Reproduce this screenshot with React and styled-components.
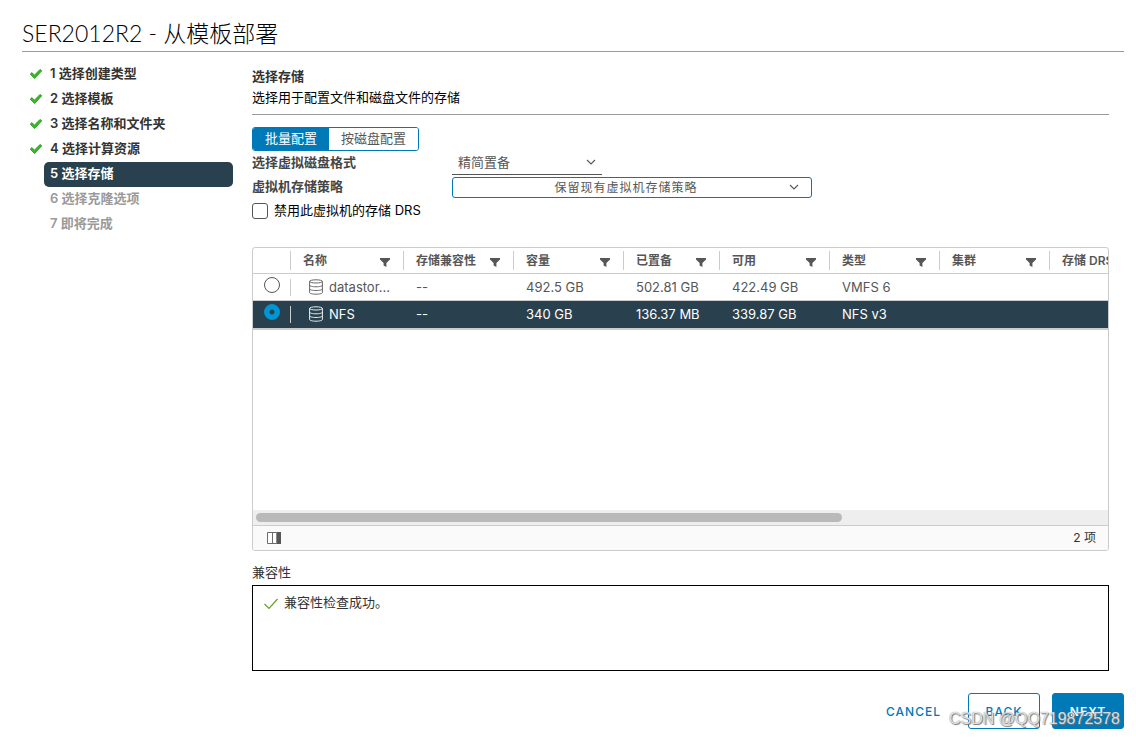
import React, { useState } from 'react';
import styled, { createGlobalStyle } from 'styled-components';

const GlobalStyle = createGlobalStyle`
  * {
    box-sizing: border-box;
  }

  body {
    margin: 0;
    background: #fff;
    color: #000;
    font-family: Inter, "Noto Sans CJK SC", sans-serif;
    font-size: 13px;
    line-height: 24px;
  }

  button, select, input {
    font-family: inherit;
  }
`;

const Wizard = styled.div`
  display: flex;
  flex-direction: column;
  min-height: 100vh;
  padding: 16px 12px 8px 22px;
`;

const Title = styled.h1`
  margin: 0;
  height: 36px;
  border-bottom: 1px solid #9a9a9a;
  font-family: Lato, "Noto Sans CJK SC", sans-serif;
  font-size: 23px;
  font-weight: 300;
  line-height: 35px;
  white-space: nowrap;
`;

const Columns = styled.div`
  display: flex;
  flex: 1;
`;

const Steps = styled.ol`
  flex: none;
  width: 211px;
  margin: 0;
  padding: 10px 0 0;
  list-style: none;
`;

const Step = styled.li`
  display: flex;
  align-items: center;
  height: 25px;
  color: ${(p) => (p.$status === 'todo' ? '#9a9a9a' : '#333')};
  font-weight: 600;
`;

const StepMark = styled.span`
  display: flex;
  width: 22px;
  padding: 0 0 2px 7px;
`;

const StepLabel = styled.span`
  flex: 1;
  height: 25px;
  padding-left: 6px;
  border-radius: 5px;
  line-height: 22px;
  background: ${(p) => (p.$active ? '#29414e' : 'transparent')};
  color: ${(p) => (p.$active ? '#fff' : 'inherit')};
`;

const Page = styled.main`
  display: flex;
  flex: 1;
  flex-direction: column;
  min-width: 0;
  padding: 14px 15px 0 19px;
`;

const PageHeader = styled.header`
  height: 49px;
  margin-bottom: 12px;
  border-bottom: 1px solid #9a9a9a;
  line-height: 21px;

  h2 {
    margin: 0;
    color: #333;
    font-size: 13px;
    font-weight: 600;
  }

  p {
    margin: 0;
  }
`;

const Toggle = styled.div`
  display: flex;
  align-self: flex-start;
  height: 24px;
  border: 1px solid #0079b8;
  border-radius: 3px;
  overflow: hidden;
`;

const ToggleButton = styled.button`
  padding: 0 12px 2px;
  border: 0;
  background: ${(p) => (p.$active ? '#0079b8' : '#fff')};
  color: ${(p) => (p.$active ? '#fff' : '#565656')};
  font-size: 13px;
  line-height: 20px;
`;

const Field = styled.div`
  display: flex;
  align-items: center;
  height: 24px;

  > label:first-child {
    width: 200px;
    padding-bottom: 2px;
    color: #454545;
    font-weight: 600;
    line-height: 22px;
  }
`;

const SelectBox = styled.div`
  display: flex;
  position: relative;
  width: ${(p) => p.$width};

  svg {
    position: absolute;
    top: 7px;
    right: ${(p) => p.$arrow};
    pointer-events: none;
  }
`;

const FormatSelect = styled.select`
  appearance: none;
  width: 100%;
  height: 24px;
  padding: 0 24px 2px 6px;
  border: 0;
  border-bottom: 1px solid #565656;
  background: #fff;
  color: #565656;
  font-size: 13px;
`;

const PolicySelect = styled.select`
  appearance: none;
  width: 100%;
  height: 21px;
  margin-top: 1px;
  padding: 0 24px 0 12px;
  border: 1px solid #0079b8;
  border-radius: 3px;
  background: #fff;
  color: #565656;
  font-size: 12px;
  letter-spacing: 1px;
  text-align-last: center;
`;

const CheckLabel = styled.label`
  display: flex;
  align-items: center;
  gap: 6px;
  line-height: 22px;
  padding-bottom: 2px;

  input {
    appearance: none;
    width: 16px;
    height: 16px;
    margin: 2px 0 0;
    border: 1px solid #565656;
    border-radius: 3px;
  }

  input:checked {
    background: #0079b8;
  }
`;

const DataGrid = styled.section`
  display: flex;
  flex: 1;
  flex-direction: column;
  min-height: 180px;
  margin-top: 24px;
  border: 1px solid #ccc;
  border-radius: 3px;
  overflow: hidden;
`;

const Viewport = styled.div`
  flex: 1;
  overflow: hidden;
`;

const Table = styled.table`
  width: 1250px;
  table-layout: fixed;
  border-collapse: separate;
  border-spacing: 0;

  th, td {
    height: 27px;
    padding: 0;
    text-align: left;
    white-space: nowrap;
  }

  th {
    height: 26px;
    border-bottom: 1px solid #ccc;
    color: #565656;
    font-size: 12px;
    font-weight: 600;
  }

  td {
    border-bottom: 1px solid #ccc;
    line-height: 26px;
    vertical-align: top;
  }
`;

const Col = styled.col`
  width: ${(p) => p.$width};
`;

const HeadCell = styled.div`
  display: flex;
  align-items: center;
  justify-content: space-between;
  height: 19px;
  padding: 0 13px 0 12px;
  border-right: 1px solid #ccc;
  line-height: 18px;

  svg {
    margin-top: 4px;
  }
`;

const Row = styled.tr`
  background: ${(p) => (p.$selected ? '#29414e' : '#fff')};
  color: ${(p) => (p.$selected ? '#fff' : '#565656')};

  &:last-child td {
    height: 29px;
    border-bottom-width: 2px;
  }
`;

const RadioCell = styled.div`
  display: flex;
  height: 17px;
  margin-top: 5px;
  padding-left: 11px;
  border-right: 1px solid #ccc;
`;

const Radio = styled.input`
  appearance: none;
  width: 16px;
  height: 16px;
  margin: -2px 0 0;
  border: 1px solid #565656;
  border-radius: 50%;

  &:checked {
    border-color: #0095d3;
    background: radial-gradient(circle, #29414e 2px, #0095d3 3px);
  }
`;

const Cell = styled.div`
  display: flex;
  align-items: center;
  gap: 6px;
  padding: 0 12px;

  svg {
    flex: none;
    margin-left: 5px;
  }

  span {
    min-width: 0;
    overflow: hidden;
    text-overflow: ellipsis;
  }
`;

const ScrollTrack = styled.div`
  height: 15px;
  padding: 3px;
  background: #eee;
`;

const ScrollThumb = styled.div`
  width: 69%;
  height: 9px;
  border-radius: 5px;
  background: #b9b9b9;
`;

const GridFooter = styled.footer`
  display: flex;
  align-items: center;
  justify-content: space-between;
  height: 25px;
  padding: 0 12px 1px 14px;
  border-top: 1px solid #ccc;
  background: #fafafa;
  color: #333;
  font-size: 12px;
`;

const IconButton = styled.button`
  display: flex;
  padding: 0;
  border: 0;
  background: none;
`;

const CompatTitle = styled.h3`
  margin: 10px 0 0;
  padding-bottom: 2px;
  color: #333;
  font-size: 13px;
  font-weight: 400;
  line-height: 22px;
`;

const CompatBox = styled.div`
  display: flex;
  gap: 6px;
  height: 86px;
  padding: 5px 11px;
  border: 1px solid #000;
  color: #333;
  line-height: 22px;

  svg {
    margin-top: 6px;
  }
`;

const Actions = styled.div`
  display: flex;
  justify-content: flex-end;
  gap: 12px;
  margin-top: 22px;
`;

const ActionButton = styled.button`
  min-width: 72px;
  height: 36px;
  padding: 0 14px;
  border: 1px solid ${(p) => (p.$kind === 'link' ? 'transparent' : '#0079b8')};
  border-radius: 3px;
  background: ${(p) => (p.$kind === 'primary' ? '#0079b8' : 'transparent')};
  color: ${(p) => (p.$kind === 'primary' ? '#fff' : '#0079b8')};
  font-size: 12px;
  font-weight: ${(p) => (p.$kind === 'primary' ? 600 : 500)};
  letter-spacing: 1px;
`;

const Watermark = styled.div`
  position: absolute;
  right: 16px;
  bottom: 8px;
  color: rgba(255, 255, 255, 0.75);
  font-family: "Liberation Sans", sans-serif;
  font-size: 16px;
  line-height: 20px;
  text-shadow: 0 0 1px #777, 1px 1px 1px #777;
  pointer-events: none;
`;

const DoneIcon = () => (
  <svg width="14" height="12" viewBox="0 0 14 12">
    <path d="M1.2 6.2 3 4.6l2.4 2.6L11 1.4l1.8 1.4-7.2 7.8z" fill="#3bb52a" stroke="#1f9a14" strokeWidth=".8" />
  </svg>
);

const Chevron = () => (
  <svg width="10" height="8" viewBox="0 0 10 8">
    <path d="m1 2 4 4 4-4" fill="none" stroke="#565656" strokeWidth="1.1" />
  </svg>
);

const FilterIcon = () => (
  <svg width="10" height="9" viewBox="0 0 10 9">
    <path d="M0 0h10v1.4L6.4 5v4L3.6 7.6V5L0 1.4z" fill="#565656" />
  </svg>
);

const DatastoreIcon = () => (
  <svg width="15" height="16" viewBox="0 0 15 16" fill="none" stroke="currentColor" strokeWidth=".9">
    <ellipse cx="8" cy="2.4" rx="6.4" ry="1.6" />
    <path d="M1.6 2.4v11.200c0 .9 2.900 1.600 6.400 1.600s6.400-.7 6.400-1.600V2.400" />
    <path d="M1.600 6.200c0 .9 2.900 1.600 6.400 1.600s6.400-.7 6.400-1.600M1.600 9.900c0 .9 2.900 1.600 6.400 1.600s6.400-.7 6.400-1.600" />
  </svg>
);

const ColumnsIcon = () => (
  <svg width="14" height="12" viewBox="0 0 14 12">
    <path d="M.5.5h13v11H.5zM5.500.5v11" fill="#fff" stroke="#6b6b6b" />
    <path d="M10 0h4v12h-4z" fill="#565656" />
    <path d="M9.500.5v11" stroke="#8a8a8a" />
  </svg>
);

const SuccessIcon = () => (
  <svg width="14" height="13" viewBox="0 0 14 13">
    <path d="m.5 7 4.500 4.500L13.500 2" fill="none" stroke="#62a420" strokeWidth="1.2" />
  </svg>
);

const steps = [
  { label: '1 选择创建类型', status: 'done' },
  { label: '2 选择模板', status: 'done' },
  { label: '3 选择名称和文件夹', status: 'done' },
  { label: '4 选择计算资源', status: 'done' },
  { label: '5 选择存储', status: 'active' },
  { label: '6 选择克隆选项', status: 'todo' },
  { label: '7 即将完成', status: 'todo' },
];

const columns = [
  { label: '名称', width: '113px' },
  { label: '存储兼容性', width: '110px' },
  { label: '容量', width: '110px' },
  { label: '已置备', width: '96px' },
  { label: '可用', width: '110px' },
  { label: '类型', width: '110px' },
  { label: '集群', width: '110px' },
  { label: '存储 DRS', width: 'auto' },
];

const datastores = [
  { name: 'datastore1', values: ['--', '492.5 GB', '502.81 GB', '422.49 GB', 'VMFS 6', '', ''] },
  { name: 'NFS', values: ['--', '340 GB', '136.37 MB', '339.87 GB', 'NFS v3', '', ''] },
];

function StepList() {
  return (
    <Steps>
      {steps.map((step) => (
        <Step key={step.label} $status={step.status}>
          <StepMark>{step.status === 'done' && <DoneIcon />}</StepMark>
          <StepLabel $active={step.status === 'active'}>{step.label}</StepLabel>
        </Step>
      ))}
    </Steps>
  );
}

// long names are cut after eight letters so that the column stays readable
const shortName = (name) => (name.length > 9 ? `${name.slice(0, 8)}...` : name);

function DatastoreGrid() {
  const [selected, setSelected] = useState('NFS');

  return (
    <DataGrid>
      <Viewport>
        <Table>
          <colgroup>
            <Col $width="38px" />
            {columns.map((c) => <Col key={c.label} $width={c.width} />)}
          </colgroup>
          <thead>
            <tr>
              <th><HeadCell /></th>
              {columns.map((c) => (
                <th key={c.label}>
                  <HeadCell>
                    {c.label}
                    <FilterIcon />
                  </HeadCell>
                </th>
              ))}
            </tr>
          </thead>
          <tbody>
            {datastores.map((d) => (
              <Row key={d.name} $selected={selected === d.name}>
                <td>
                  <RadioCell>
                    <Radio
                      type="radio"
                      name="datastore"
                      aria-label={d.name}
                      checked={selected === d.name}
                      onChange={() => setSelected(d.name)}
                    />
                  </RadioCell>
                </td>
                <td>
                  <Cell>
                    <DatastoreIcon />
                    <span title={d.name}>{shortName(d.name)}</span>
                  </Cell>
                </td>
                {d.values.map((v, i) => (
                  <td key={i}><Cell>{v}</Cell></td>
                ))}
              </Row>
            ))}
          </tbody>
        </Table>
      </Viewport>
      <ScrollTrack>
        <ScrollThumb />
      </ScrollTrack>
      <GridFooter>
        <IconButton type="button" aria-label="列"><ColumnsIcon /></IconButton>
        <span>2 项</span>
      </GridFooter>
    </DataGrid>
  );
}

function App() {
  const [mode, setMode] = useState('batch');

  return (
    <>
      <GlobalStyle />
      <Wizard>
        <Title>SER2012R2 - 从模板部署</Title>
        <Columns>
          <StepList />
          <Page>
            <PageHeader>
              <h2>选择存储</h2>
              <p>选择用于配置文件和磁盘文件的存储</p>
            </PageHeader>
            <Toggle>
              <ToggleButton type="button" $active={mode === 'batch'} onClick={() => setMode('batch')}>
                批量配置
              </ToggleButton>
              <ToggleButton type="button" $active={mode === 'disk'} onClick={() => setMode('disk')}>
                按磁盘配置
              </ToggleButton>
            </Toggle>
            <Field>
              <label htmlFor="format">选择虚拟磁盘格式</label>
              <SelectBox $width="150px" $arrow="6px">
                <FormatSelect id="format">
                  <option>精简置备</option>
                </FormatSelect>
                <Chevron />
              </SelectBox>
            </Field>
            <Field>
              <label htmlFor="policy">虚拟机存储策略</label>
              <SelectBox $width="360px" $arrow="13px">
                <PolicySelect id="policy">
                  <option>保留现有虚拟机存储策略</option>
                </PolicySelect>
                <Chevron />
              </SelectBox>
            </Field>
            <CheckLabel>
              <input type="checkbox" />
              禁用此虚拟机的存储 DRS
            </CheckLabel>
            <DatastoreGrid />
            <CompatTitle>兼容性</CompatTitle>
            <CompatBox>
              <SuccessIcon />
              兼容性检查成功。
            </CompatBox>
          </Page>
        </Columns>
        <Actions>
          <ActionButton type="button" $kind="link">CANCEL</ActionButton>
          <ActionButton type="button" $kind="outline">BACK</ActionButton>
          <ActionButton type="button" $kind="primary">NEXT</ActionButton>
        </Actions>
      </Wizard>
      <Watermark>CSDN @QQ719872578</Watermark>
    </>
  );
}

export default App;
